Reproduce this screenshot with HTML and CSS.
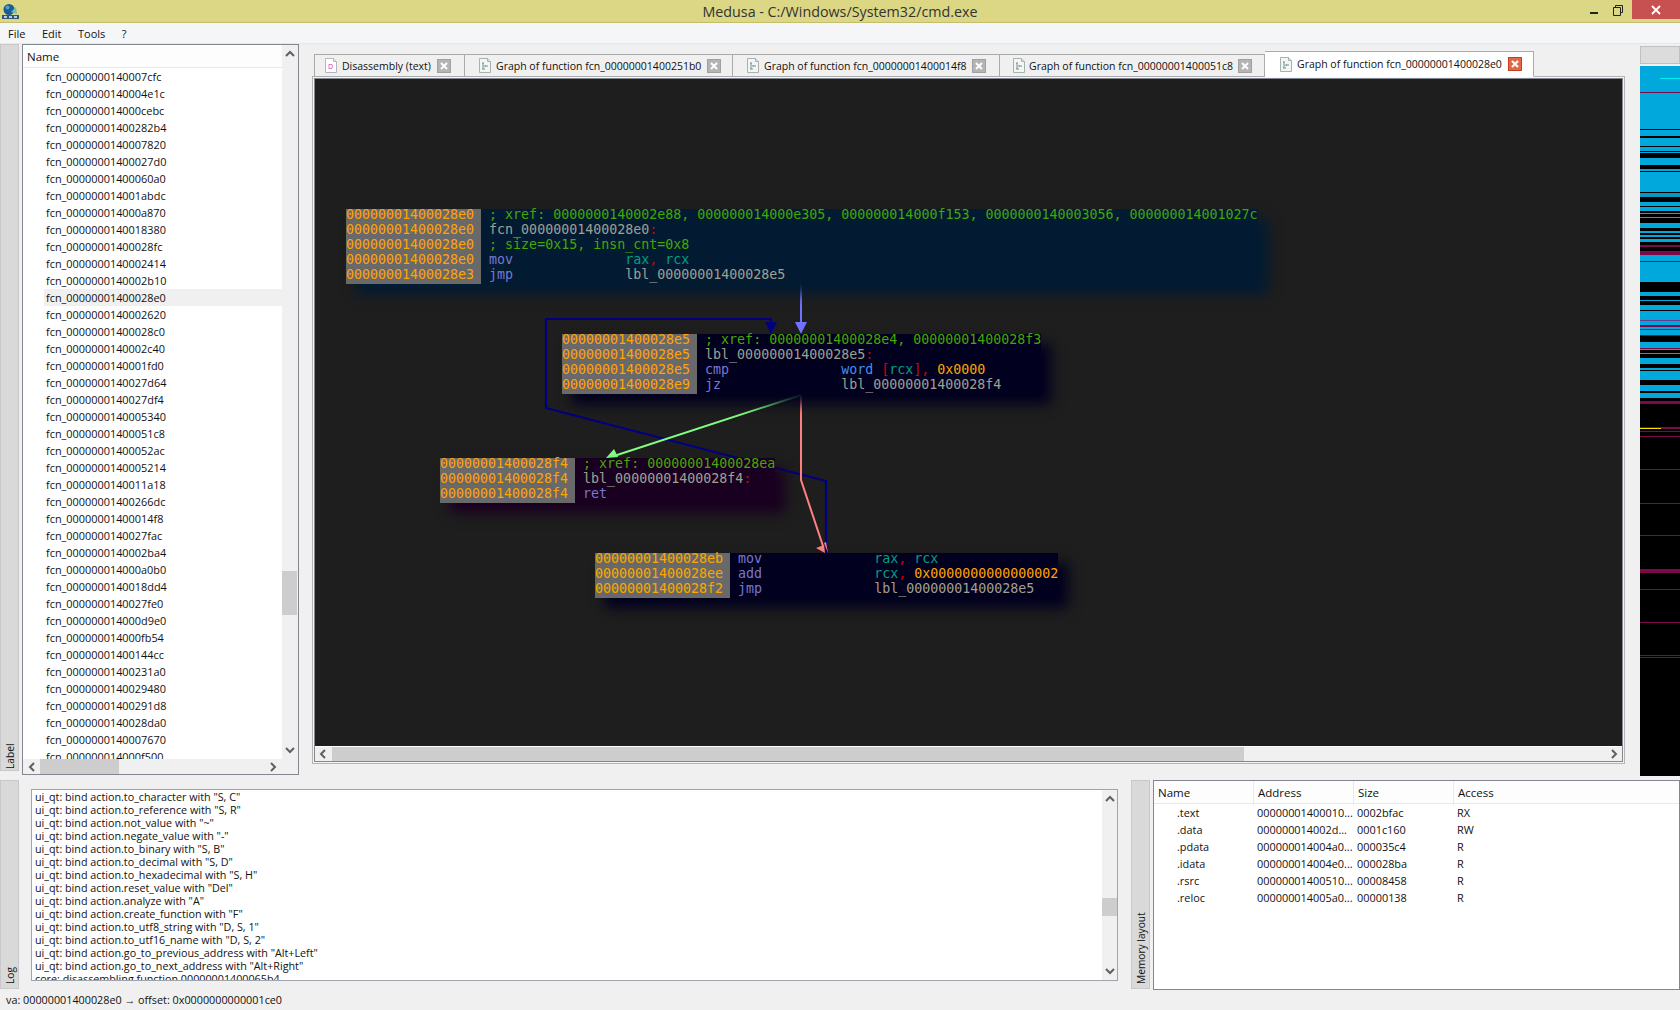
FILE: index.html
```html
<!DOCTYPE html>
<html lang="en">
<head>
<meta charset="utf-8">
<title>Medusa - C:/Windows/System32/cmd.exe</title>
<link rel="stylesheet" href="styles.css">
</head>
<body>
<header class="titlebar">
  <svg class="app-icon" width="17" height="17" viewBox="0 0 17 17"><circle cx="7" cy="6.5" r="5.5" fill="#1b5c94"/><circle cx="5.5" cy="4.5" r="2" fill="#5c9ac8"/><path d="M9 9l5-5 1 7z" fill="#6cc0c0"/><rect x="0" y="12" width="17" height="4" fill="#33557a"/><rect x="2" y="13" width="3" height="2" fill="#b8ccd8"/><rect x="7" y="13" width="3" height="2" fill="#b8ccd8"/><rect x="12" y="13" width="3" height="2" fill="#b8ccd8"/></svg>
  <div class="title">Medusa - C:/Windows/System32/cmd.exe</div>
  <div class="winbtns">
    <svg class="wb-min" width="8" height="3" viewBox="0 0 8 3"><rect width="8" height="2" y="1" fill="#222"/></svg>
    <svg class="wb-max" width="10" height="11" viewBox="0 0 10 11"><path d="M2.5 2.5V.5h7v7h-2M.5 2.5h7v8h-7z" fill="none" stroke="#222"/></svg>
    <div class="wb-close"><svg width="10" height="10" viewBox="0 0 10 10"><path d="M1 1l8 8M9 1l-8 8" stroke="#fff" stroke-width="1.8"/></svg></div>
  </div>
</header>
<nav class="menubar"><span>File</span><span>Edit</span><span>Tools</span><span>?</span></nav>
<main class="main">
  <section class="upper">
    <div class="vtab vtab-label"><span>Label</span></div>
    <div class="list-frame">
      <div class="list-body">
        <div class="list-head">Name</div>
        <div class="list-rows">
          <div class="row">fcn_0000000140007cfc</div>
          <div class="row">fcn_0000000140004e1c</div>
          <div class="row">fcn_000000014000cebc</div>
          <div class="row">fcn_00000001400282b4</div>
          <div class="row">fcn_0000000140007820</div>
          <div class="row">fcn_00000001400027d0</div>
          <div class="row">fcn_00000001400060a0</div>
          <div class="row">fcn_000000014001abdc</div>
          <div class="row">fcn_000000014000a870</div>
          <div class="row">fcn_0000000140018380</div>
          <div class="row">fcn_00000001400028fc</div>
          <div class="row">fcn_0000000140002414</div>
          <div class="row">fcn_0000000140002b10</div>
          <div class="row row-sel">fcn_00000001400028e0</div>
          <div class="row">fcn_0000000140002620</div>
          <div class="row">fcn_00000001400028c0</div>
          <div class="row">fcn_0000000140002c40</div>
          <div class="row">fcn_0000000140001fd0</div>
          <div class="row">fcn_0000000140027d64</div>
          <div class="row">fcn_0000000140027df4</div>
          <div class="row">fcn_0000000140005340</div>
          <div class="row">fcn_00000001400051c8</div>
          <div class="row">fcn_00000001400052ac</div>
          <div class="row">fcn_0000000140005214</div>
          <div class="row">fcn_0000000140011a18</div>
          <div class="row">fcn_00000001400266dc</div>
          <div class="row">fcn_00000001400014f8</div>
          <div class="row">fcn_0000000140027fac</div>
          <div class="row">fcn_0000000140002ba4</div>
          <div class="row">fcn_000000014000a0b0</div>
          <div class="row">fcn_0000000140018dd4</div>
          <div class="row">fcn_0000000140027fe0</div>
          <div class="row">fcn_000000014000d9e0</div>
          <div class="row">fcn_000000014000fb54</div>
          <div class="row">fcn_00000001400144cc</div>
          <div class="row">fcn_00000001400231a0</div>
          <div class="row">fcn_0000000140029480</div>
          <div class="row">fcn_00000001400291d8</div>
          <div class="row">fcn_0000000140028da0</div>
          <div class="row">fcn_0000000140007670</div>
          <div class="row">fcn_000000014000f500</div>
        </div>
      </div>
      <div class="vscroll list-vs">
        <svg class="arrow arrow-up" width="12" height="14" viewBox="0 0 12 14"><path d="M2 9l4-4 4 4" fill="none" stroke="#606060" stroke-width="2"/></svg>
        <div class="vs-track"><div class="thumb list-thumb"></div></div>
        <svg class="arrow arrow-down" width="12" height="14" viewBox="0 0 12 14"><path d="M2 5l4 4 4-4" fill="none" stroke="#606060" stroke-width="2"/></svg>
      </div>
      <div class="hscroll list-hs">
        <svg class="arrow arrow-left" width="14" height="12" viewBox="0 0 14 12"><path d="M9 2L5 6l4 4" fill="none" stroke="#606060" stroke-width="2"/></svg>
        <div class="hs-track"><div class="thumb list-hthumb"></div></div>
        <svg class="arrow arrow-right" width="14" height="12" viewBox="0 0 14 12"><path d="M5 2l4 4-4 4" fill="none" stroke="#606060" stroke-width="2"/></svg>
      </div>
    </div>
    <div class="tabpane">
      <div class="tabs">
        <div class="tab t1">
          <svg class="doc" width="12" height="15" viewBox="0 0 12 15"><path d="M.5.5h8l3 3v11H.5z" fill="#fff" stroke="#b5b5c0"/><path d="M8.500.5v3h3" fill="#e8e8ee" stroke="#b5b5c0"/><text x="3" y="11" class="doc-d">D</text></svg>
          <span>Disassembly (text)</span>
          <span class="close"><svg width="8" height="8" viewBox="0 0 8 8"><path d="M1 1l6 6M7 1L1 7" stroke="#fff" stroke-width="2"/></svg></span>
        </div>
        <div class="tab t2">
          <svg class="doc" width="12" height="15" viewBox="0 0 12 15"><path d="M.5.5h8l3 3v11H.5z" fill="#f4f6f6" stroke="#a8b0b0"/><path d="M8.500.5v3h3" fill="#dde" stroke="#a8b0b0"/><path d="M3 5h2M6 8h3M3 11h3M4 5v6M5 8h2" stroke="#70908c" fill="none"/></svg>
          <span>Graph of function fcn_00000001400251b0</span>
          <span class="close"><svg width="8" height="8" viewBox="0 0 8 8"><path d="M1 1l6 6M7 1L1 7" stroke="#fff" stroke-width="2"/></svg></span>
        </div>
        <div class="tab t3">
          <svg class="doc" width="12" height="15" viewBox="0 0 12 15"><path d="M.5.5h8l3 3v11H.5z" fill="#f4f6f6" stroke="#a8b0b0"/><path d="M8.500.5v3h3" fill="#dde" stroke="#a8b0b0"/><path d="M3 5h2M6 8h3M3 11h3M4 5v6M5 8h2" stroke="#70908c" fill="none"/></svg>
          <span>Graph of function fcn_00000001400014f8</span>
          <span class="close"><svg width="8" height="8" viewBox="0 0 8 8"><path d="M1 1l6 6M7 1L1 7" stroke="#fff" stroke-width="2"/></svg></span>
        </div>
        <div class="tab t4">
          <svg class="doc" width="12" height="15" viewBox="0 0 12 15"><path d="M.5.5h8l3 3v11H.5z" fill="#f4f6f6" stroke="#a8b0b0"/><path d="M8.500.5v3h3" fill="#dde" stroke="#a8b0b0"/><path d="M3 5h2M6 8h3M3 11h3M4 5v6M5 8h2" stroke="#70908c" fill="none"/></svg>
          <span>Graph of function fcn_00000001400051c8</span>
          <span class="close"><svg width="8" height="8" viewBox="0 0 8 8"><path d="M1 1l6 6M7 1L1 7" stroke="#fff" stroke-width="2"/></svg></span>
        </div>
        <div class="tab tab-active">
          <svg class="doc" width="12" height="15" viewBox="0 0 12 15"><path d="M.5.5h8l3 3v11H.5z" fill="#f4f6f6" stroke="#a8b0b0"/><path d="M8.500.5v3h3" fill="#dde" stroke="#a8b0b0"/><path d="M3 5h2M6 8h3M3 11h3M4 5v6M5 8h2" stroke="#70908c" fill="none"/></svg>
          <span>Graph of function fcn_00000001400028e0</span>
          <span class="close close-active"><svg width="8" height="8" viewBox="0 0 8 8"><path d="M1 1l6 6M7 1L1 7" stroke="#fff" stroke-width="2"/></svg></span>
        </div>
      </div>
      <div class="pane-body">
        <div class="pane-inner">
          <div class="graph">
            <svg class="edges" width="1307" height="666" viewBox="315 79 1307 666">
              <path d="M826 553V481L546 408V319H771V326" fill="none" stroke="#000080" stroke-width="2.2"/>
              <path d="M765 322h12l-6 12z" fill="#000080"/>
              <path d="M801 284V326" fill="none" stroke="#7272ff" stroke-width="2"/>
              <path d="M795 322h12l-6 12z" fill="#7272ff"/>
              <path d="M801 395L614 456" fill="none" stroke="#80ff80" stroke-width="2"/>
              <path d="M606 458l8-9 4 8z" fill="#80ff80"/>
              <path d="M801 395V480L823 546" fill="none" stroke="#ff8080" stroke-width="2"/>
              <path d="M825 553l-9-5 8-3z" fill="#ff8080"/>
              <path d="M828 553l-2-11-2 1z" fill="#ff8080"/>
            </svg>
            <div class="block b1">
              <div class="addr"><div class="tx">00000001400028e0<br>00000001400028e0<br>00000001400028e0<br>00000001400028e0<br>00000001400028e3</div></div>
              <div class="code"><span class="cm">; xref: 0000000140002e88, 000000014000e305, 000000014000f153, 0000000140003056, 000000014001027c</span>
<span class="lb">fcn_00000001400028e0</span><span class="rd">:</span>
<span class="cm">; size=0x15, insn_cnt=0x8</span>
<span class="mn">mov              </span><span class="rg">rax</span><span class="rd">,</span> <span class="rg">rcx</span>
<span class="mn">jmp              </span><span class="lb">lbl_00000001400028e5</span></div>
            </div>
            <div class="block b2">
              <div class="addr"><div class="tx">00000001400028e5<br>00000001400028e5<br>00000001400028e5<br>00000001400028e9</div></div>
              <div class="code"><span class="cm">; xref: 00000001400028e4, 00000001400028f3</span>
<span class="lb">lbl_00000001400028e5</span><span class="rd">:</span>
<span class="mn">cmp              </span><span class="ty">word</span> <span class="rd">[</span><span class="rg">rcx</span><span class="rd">],</span> <span class="nm">0x0000</span>
<span class="mn">jz               </span><span class="lb">lbl_00000001400028f4</span></div>
            </div>
            <div class="block b3">
              <div class="addr"><div class="tx">00000001400028f4<br>00000001400028f4<br>00000001400028f4</div></div>
              <div class="code"><span class="cm">; xref: 00000001400028ea</span>
<span class="lb">lbl_00000001400028f4</span><span class="rd">:</span>
<span class="mn">ret</span></div>
            </div>
            <div class="block b2 b4">
              <div class="addr"><div class="tx">00000001400028eb<br>00000001400028ee<br>00000001400028f2</div></div>
              <div class="code"><span class="mn">mov              </span><span class="rg">rax</span><span class="rd">,</span> <span class="rg">rcx</span>
<span class="mn">add              </span><span class="rg">rcx</span><span class="rd">,</span> <span class="nm">0x0000000000000002</span>
<span class="mn">jmp              </span><span class="lb">lbl_00000001400028e5</span></div>
            </div>
          </div>
          <div class="hscroll graph-hs">
            <svg class="arrow" width="16" height="14" viewBox="0 0 16 14"><path d="M10 3L6 7l4 4" fill="none" stroke="#606060" stroke-width="2"/></svg>
            <div class="hs-track"><div class="thumb graph-thumb"></div></div>
            <svg class="arrow" width="16" height="14" viewBox="0 0 16 14"><path d="M6 3l4 4-4 4" fill="none" stroke="#606060" stroke-width="2"/></svg>
          </div>
        </div>
      </div>
    </div>
    <div class="mapcol">
      <div class="mapbtn"></div>
      <svg class="map" width="40" height="710" viewBox="0 18 120 2130" preserveAspectRatio="none">
        <rect class="mk" x="0" y="18" width="120" height="2130"/>
        <rect class="mb" x="0" y="18" width="120" height="189"/>
        <rect class="mb" x="0" y="210" width="120" height="18"/>
        <rect class="mb" x="0" y="235" width="120" height="23"/>
        <rect class="mb" x="0" y="262" width="120" height="11"/>
        <rect class="mb" x="0" y="276" width="120" height="3"/>
        <rect class="mb" x="0" y="294" width="120" height="21"/>
        <rect class="mb" x="0" y="327" width="120" height="6"/>
        <rect class="mb" x="0" y="336" width="120" height="60"/>
        <rect class="mb2" x="0" y="400" width="120" height="11"/>
        <rect class="mb" x="0" y="426" width="120" height="12"/>
        <rect class="mb" x="0" y="441" width="120" height="12"/>
        <rect class="mb" x="0" y="459" width="120" height="2"/>
        <rect class="mb" x="0" y="471" width="120" height="3"/>
        <rect class="mb" x="0" y="489" width="120" height="14"/>
        <rect class="mb" x="0" y="513" width="120" height="6"/>
        <rect class="mb" x="0" y="525" width="120" height="7"/>
        <rect class="mb" x="0" y="537" width="120" height="9"/>
        <rect class="mb" x="0" y="585" width="120" height="18"/>
        <rect class="mb" x="0" y="607" width="120" height="59"/>
        <rect class="mb" x="0" y="696" width="120" height="12"/>
        <rect class="mb" x="0" y="720" width="120" height="3"/>
        <rect class="mb" x="0" y="736" width="120" height="14"/>
        <rect class="mb" x="0" y="753" width="120" height="27"/>
        <rect class="mb" x="0" y="784" width="120" height="11"/>
        <rect class="mb" x="0" y="801" width="120" height="5"/>
        <rect class="mb" x="0" y="809" width="120" height="16"/>
        <rect class="mb" x="0" y="846" width="120" height="18"/>
        <rect class="mb" x="0" y="867" width="120" height="3"/>
        <rect class="mb" x="0" y="879" width="120" height="3"/>
        <rect class="mb" x="0" y="894" width="120" height="18"/>
        <rect class="mb" x="0" y="924" width="120" height="6"/>
        <rect class="mb" x="0" y="933" width="120" height="27"/>
        <rect class="mb" x="0" y="975" width="120" height="18"/>
        <rect class="mb" x="0" y="999" width="120" height="15"/>
        <rect class="mm" x="0" y="96" width="120" height="3"/>
        <rect class="mm" x="0" y="555" width="120" height="6"/>
        <rect class="mm" x="0" y="573" width="120" height="12"/>
        <rect class="mm" x="0" y="603" width="120" height="3"/>
        <rect class="mp" x="0" y="780" width="120" height="3"/>
        <rect class="mm" x="0" y="795" width="120" height="6"/>
        <rect class="mm" x="0" y="806" width="120" height="3"/>
        <rect class="mm" x="0" y="825" width="120" height="3"/>
        <rect class="mm" x="0" y="864" width="120" height="3"/>
        <rect class="mm" x="0" y="1023" width="120" height="9"/>
        <rect class="mm" x="0" y="1101" width="120" height="6"/>
        <rect class="mm" x="0" y="1113" width="120" height="3"/>
        <rect class="mm" x="0" y="1128" width="120" height="3"/>
        <rect class="mm" x="0" y="1228" width="120" height="3"/>
        <rect class="mm" x="0" y="1328" width="120" height="3"/>
        <rect class="mm" x="0" y="1426" width="120" height="3"/>
        <rect class="mm" x="0" y="1527" width="120" height="12"/>
        <rect class="mm" x="0" y="1587" width="120" height="3"/>
        <rect class="mm" x="0" y="1686" width="120" height="3"/>
        <rect class="mm" x="0" y="1785" width="120" height="3"/>
        <rect class="mm" x="0" y="1791" width="120" height="3"/>
        <rect class="mc" x="60" y="54" width="60" height="3"/>
        <rect class="my" x="0" y="1104" width="63" height="3"/>
      </svg>
    </div>
  </section>
  <section class="lower">
    <div class="vtab vtab-log"><span>Log</span></div>
    <div class="log-frame">
      <div class="log-text">
        <div>ui_qt: bind action.to_character with "S, C"</div>
        <div>ui_qt: bind action.to_reference with "S, R"</div>
        <div>ui_qt: bind action.not_value with "~"</div>
        <div>ui_qt: bind action.negate_value with "-"</div>
        <div>ui_qt: bind action.to_binary with "S, B"</div>
        <div>ui_qt: bind action.to_decimal with "S, D"</div>
        <div>ui_qt: bind action.to_hexadecimal with "S, H"</div>
        <div>ui_qt: bind action.reset_value with "Del"</div>
        <div>ui_qt: bind action.analyze with "A"</div>
        <div>ui_qt: bind action.create_function with "F"</div>
        <div>ui_qt: bind action.to_utf8_string with "D, S, 1"</div>
        <div>ui_qt: bind action.to_utf16_name with "D, S, 2"</div>
        <div>ui_qt: bind action.go_to_previous_address with "Alt+Left"</div>
        <div>ui_qt: bind action.go_to_next_address with "Alt+Right"</div>
        <div>core: disassembling function 00000001400065b4</div>
      </div>
      <div class="vscroll log-vs">
        <svg class="arrow arrow-up" width="12" height="14" viewBox="0 0 12 14"><path d="M2 9l4-4 4 4" fill="none" stroke="#606060" stroke-width="2"/></svg>
        <div class="vs-track"><div class="thumb log-thumb"></div></div>
        <svg class="arrow arrow-down" width="12" height="14" viewBox="0 0 12 14"><path d="M2 5l4 4 4-4" fill="none" stroke="#606060" stroke-width="2"/></svg>
      </div>
    </div>
    <div class="vtab vtab-mem"><span>Memory layout</span></div>
    <div class="mem-frame">
      <div class="mem-row mem-head"><span>Name</span><span>Address</span><span>Size</span><span>Access</span></div>
      <div class="mem-row"><span class="sec">.text</span><span>00000001400010...</span><span>0002bfac</span><span>RX</span></div>
      <div class="mem-row"><span class="sec">.data</span><span>000000014002d...</span><span>0001c160</span><span>RW</span></div>
      <div class="mem-row"><span class="sec">.pdata</span><span>000000014004a0...</span><span>000035c4</span><span>R</span></div>
      <div class="mem-row"><span class="sec">.idata</span><span>000000014004e0...</span><span>000028ba</span><span>R</span></div>
      <div class="mem-row"><span class="sec">.rsrc</span><span>00000001400510...</span><span>00008458</span><span>R</span></div>
      <div class="mem-row"><span class="sec">.reloc</span><span>000000014005a0...</span><span>00000138</span><span>R</span></div>
    </div>
  </section>
</main>
<footer class="status">va: 00000001400028e0 → offset: 0x0000000000001ce0</footer>
</body>
</html>
```
FILE: styles.css
```css
* { box-sizing: border-box; }
html, body { margin: 0; padding: 0; }
body {
  width: 1680px; height: 1010px; overflow: hidden;
  background: #f0f0f0; color: #111;
  font-family: "Open Sans", "Noto Sans", sans-serif; font-size: 10.9px;
  display: flex; flex-direction: column;
}
.titlebar {
  height: 23px; flex: none; position: relative;
  background: #dbd784; border-bottom: 1px solid #c2be6c;
  display: flex; align-items: center;
}
.app-icon { margin: 0 0 0 2px; }
.title {
  position: absolute; left: 0; right: 0; top: 2px; text-align: center;
  font-size: 14.3px; line-height: 20px; color: #333;
}
.winbtns { margin-left: auto; display: flex; align-items: flex-start; height: 100%; }
.wb-min { margin: 11px 15px 0 0; }
.wb-max { margin: 5px 9px 0 0; }
.wb-close {
  width: 48px; height: 19px; background: #c75050;
  display: flex; align-items: center; justify-content: center;
}
.menubar {
  height: 21px; flex: none; background: #f5f6f7;
  border-bottom: 1px solid #e8e8e8;
  display: flex; align-items: center; padding-left: 8px; gap: 16.5px;
  font-size: 11px;
}
.main { flex: none; display: flex; flex-direction: column; }
.upper { height: 732px; flex: none; display: flex; }
.lower { height: 210px; flex: none; display: flex; margin-top: 4px; }
.vtab {
  width: 19px; background: #d9d9d9; border: 1px solid #c8c8c8; flex: none;
  writing-mode: vertical-rl; transform: rotate(180deg);
  display: flex; align-items: center; padding: 4px 0; font-size: 10.2px;
}
.vtab-label { height: 727px; padding-top: 1px; }
.vtab-log { height: 209px; }
.vtab-mem { height: 209px; margin-left: 13px; }

.list-frame {
  width: 277px; height: 731px; margin-left: 3px; flex: none;
  border: 1px solid #828790; background: #f0f0f0;
  display: grid; grid-template-columns: 1fr 16px; grid-template-rows: 1fr 15px;
}
.list-body { overflow: hidden; min-height: 0; background: #fff; }
.list-head { height: 23px; line-height: 24px; padding-left: 4px; border-bottom: 1px solid #e5ebf3; background: #fdfdfd; font-size: 11.5px; }
.list-rows { height: 691px; overflow: hidden; }
.row { height: 17px; line-height: 18px; padding-left: 23px; }
.row-sel { background: #f0f0f0; margin-left: 21px; padding-left: 2px; }
.vscroll { background: #f0f0f0; display: flex; flex-direction: column; align-items: center; }
.vs-track { flex: 1; width: 100%; position: relative; }
.hscroll { background: #f0f0f0; display: flex; align-items: center; }
.hs-track { flex: 1; height: 100%; position: relative; }
.thumb { background: #cdcdcd; position: absolute; }
.arrow { flex: none; }
.arrow-up { margin-top: 2px; }
.arrow-down { margin-bottom: 2px; }
.arrow-left { margin-left: 2px; }
.arrow-right { margin-right: 2px; }
.list-vs { grid-column: 2; grid-row: 1; }
.list-hs { grid-column: 1; grid-row: 2; }
.list-thumb { top: 510px; height: 44px; left: 0; right: 1px; }
.list-hthumb { left: 1px; width: 79px; top: 0; bottom: 0; }

.tabpane { width: 1313px; margin-left: 13px; flex: none; height: 720px; display: flex; flex-direction: column; }
.tabs { height: 33px; flex: none; display: flex; align-items: flex-end; padding-left: 2px; position: relative; z-index: 1; margin-bottom: -1px; }
.tab {
  height: 23px; flex: none; display: flex; align-items: center;
  background: #f0f0f0; border: 1px solid #ababab; border-left: 0;
  padding-left: 14px; gap: 5px; font-size: 10.5px;
}
.t1 { width: 151px; border-left: 1px solid #ababab; padding-left: 10px; gap: 5px; }
.t2 { width: 268px; }
.t3 { width: 267px; }
.t4 { width: 265px; padding-left: 13px; gap: 4px; }
.tab-active { width: 269px; height: 26px; background: #fff; border-bottom: 1px solid #fff; padding-left: 15px; }
.doc-d { font-size: 7px; fill: #d030c0; font-family: "Open Sans", sans-serif; }
.close {
  width: 14px; height: 14px; background: #b4b4b4; border: 1px solid #a0a0a0;
  display: flex; align-items: center; justify-content: center; margin-left: 1px;
}
.close-active { background: #e06848; border-color: #c84020; }
.pane-body { flex: 1; border: 1px solid #b4b4b4; padding: 1px; background: #f4f4f4; min-height: 0; }
.pane-inner { height: 100%; border: 1px solid #828790; display: flex; flex-direction: column; }
.graph {
  flex: 1; min-height: 0; position: relative; overflow: hidden;
  background: #1e1e1e;
  font-family: "DejaVu Sans Mono", "Liberation Mono", monospace;
  font-size: 13.3px; line-height: 15px;
}
.graph-hs { height: 15px; flex: none; border-top: 1px solid #fff; }
.graph-thumb { left: 1px; width: 912px; top: 0; bottom: 0; }
.block { position: absolute; display: flex; white-space: pre; }
.addr { background: #696969; color: #ffa500; padding-right: 7px; margin-right: 8px; }
.tx { margin-top: -2px; margin-bottom: 2px; }
.code { color: #a0a090; margin-top: -2px; margin-bottom: 2px; }
.b1 { left: 31px; top: 130px; background: #021b33; box-shadow: 10px 10px 12px #021b33; }
.b2 { left: 247px; top: 255px; background: #02001f; box-shadow: 10px 10px 12px #02001f; }
.b3 { left: 125px; top: 379px; background: #1a0020; box-shadow: 10px 10px 12px #1a0020; }
.b4 { left: 280px; top: 474px; }
.cm { color: #44a800; }
.lb { color: #a0a090; }
.rd { color: #d80000; }
.mn { color: #7878d0; }
.rg { color: #00a080; }
.ty { color: #4090f0; }
.nm { color: #ffa500; }
.edges { position: absolute; left: 0; top: 0; }

.mapcol { width: 40px; margin-left: 15px; flex: none; display: flex; flex-direction: column; }
.mapbtn { height: 18px; margin-top: 2px; margin-bottom: 2px; background: #dcdcdc; border: 1px solid #c0c0c0; }
.map { display: block; shape-rendering: crispEdges; }
.mk { fill: #000; }
.mb { fill: #00a8dc; }
.mb2 { fill: #0a94c0; }
.mm { fill: #7c0a4a; }
.mp { fill: #6a3a90; }
.mc { fill: #00f0f0; }
.my { fill: #ffe000; }

.log-frame {
  width: 1087px; height: 192px; margin: 9px 0 0 12px; flex: none;
  border: 1px solid #a0a4ac; background: #fff; display: flex;
}
.log-text { flex: 1; overflow: hidden; padding: 1px 0 0 3px; line-height: 13px; min-width: 0; font-size: 10.75px; }
.log-vs { width: 15px; flex: none; }
.log-thumb { top: 92px; height: 18px; left: 0; right: 0; }
.mem-frame {
  width: 527px; height: 210px; margin-left: 3px; flex: none;
  border: 1px solid #828790; background: #fff;
}
.mem-row { display: grid; grid-template-columns: 100px 100px 100px 1fr; height: 17px; line-height: 18px; }
.mem-row span { padding-left: 3px; white-space: nowrap; }
.mem-row .sec { padding-left: 23px; }
.mem-head { height: 23px; line-height: 24px; font-size: 11.5px; background: #fdfdfd; border-bottom: 1px solid #e5ebf3; }
.mem-head span { padding-left: 4px; border-right: 1px solid #e5ebf3; }
.mem-head span:last-child { border-right: 0; }
.status { flex: none; height: 20px; line-height: 20px; padding-left: 6px; font-size: 10.8px; }
```
